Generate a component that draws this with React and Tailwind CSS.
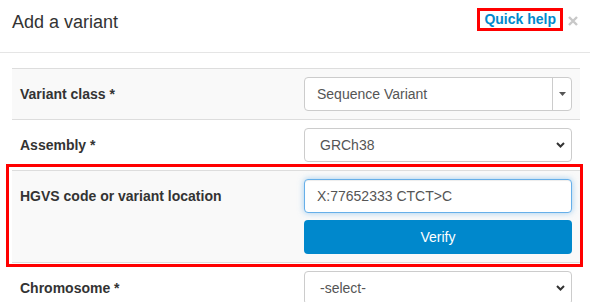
import React from "react";

function Chevron() {
  return (
    <svg width="9" height="6" viewBox="0 0 9 6" fill="none">
      <path d="M1 1l3.5 3.5L8 1" stroke="#333" strokeWidth="2" />
    </svg>
  );
}

function Row({ label, striped, children }) {
  return (
    <div className={`flex border-t border-[#ddd] ${striped ? "bg-[#f9f9f9]" : "bg-white"}`}>
      <div className="w-1/2 px-2 pt-[15px] pb-2 text-[14px] leading-[20px] font-bold text-[#333]">
        {label}
      </div>
      <div className="w-1/2 p-2">{children}</div>
    </div>
  );
}

function NativeSelect({ value }) {
  return (
    <div className="h-[34px] flex items-center justify-between rounded-[4px] border border-[#ccc] bg-white pl-[15px] pr-[6px] text-[14px] text-[#555]">
      <span>{value}</span>
      <Chevron />
    </div>
  );
}

export default function App() {
  return (
    <div className="relative w-[590px] h-[302px] overflow-hidden bg-white font-['Liberation_Sans',Arial,sans-serif]">
      <div className="h-[53px] flex items-start justify-between border-b border-[#e5e5e5] pl-3 pr-[12px]">
        <div className="mt-[12px] text-[18px] leading-[20px] text-[#333]">Add a variant</div>
        <div className="mt-[8px] flex items-center gap-[5px]">
          <a className="border-[3px] border-[#f00] px-[4px] text-[14px] leading-[17px] font-bold text-[#0088cc]">
            Quick help
          </a>
          <svg width="10" height="10" viewBox="0 0 10 10" className="mt-[2px]">
            <path d="M1 1l8 8M9 1l-8 8" stroke="#c8c8c8" strokeWidth="2.4" />
          </svg>
        </div>
      </div>

      <div className="pl-3 pr-[10px] pt-[15px]">
        <Row label="Variant class *" striped>
          <div className="h-[34px] flex items-stretch rounded-[4px] border border-[#ccc] bg-white text-[14px] text-[#555]">
            <div className="flex-1 flex items-center pl-[12px]">Sequence Variant</div>
            <div className="w-[19px] border-l border-[#ccc] flex items-center justify-center">
              <svg width="7" height="4" viewBox="0 0 7 4">
                <path d="M0 0h7L3.5 4z" fill="#555" />
              </svg>
            </div>
          </div>
        </Row>
        <Row label="Assembly *">
          <NativeSelect value="GRCh38" />
        </Row>
        <Row label="HGVS code or variant location" striped>
          <div className="h-[34px] flex items-center rounded-[4px] border border-[#66afe9] bg-white pl-[12px] text-[14px] text-[#555] shadow-[inset_0_1px_1px_rgba(0,0,0,0.075),0_0_6px_rgba(102,175,233,0.6)]">
            X:77652333 CTCT&gt;C
          </div>
          <button className="mt-[7px] w-full h-[34px] rounded-[4px] bg-[#0088cc] text-white text-[14px]">
            Verify
          </button>
        </Row>
        <Row label="Chromosome *">
          <NativeSelect value="-select-" />
        </Row>
      </div>

      <div className="absolute left-[6px] top-[164px] w-[577px] h-[103px] border-[3px] border-[#f00] pointer-events-none" />
    </div>
  );
}
